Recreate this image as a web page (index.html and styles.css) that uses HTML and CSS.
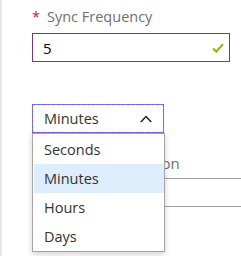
FILE: index.html
```html
<!DOCTYPE html>
<html lang="en">
<head>
    <meta charset="UTF-8">
    <meta name="viewport" content="width=device-width, initial-scale=1.0">
    <title>Sync Settings</title>
    <link rel="stylesheet" href="styles.css">
</head>
<body>

    <div class="form">
        <div class="field-label"><span class="required">*</span>Sync Frequency</div>
        <div class="text-input">
            <span>5</span>
            <svg class="check" width="12" height="10" viewBox="0 0 12 10">
                <path d="M1 5.5 L4.3 8.6 L11 1.2" fill="none" stroke="#7fba00" stroke-width="2"/>
            </svg>
        </div>

        <div class="dropdown">
            <div class="select">
                <span>Minutes</span>
                <svg width="12" height="8" viewBox="0 0 12 8">
                    <path d="M0.8 7 L6 1.6 L11.2 7" fill="none" stroke="#222" stroke-width="1.5"/>
                </svg>
            </div>
            <ul class="menu">
                <li class="menu-item">Seconds</li>
                <li class="menu-item active">Minutes</li>
                <li class="menu-item">Hours</li>
                <li class="menu-item">Days</li>
            </ul>
        </div>

        <div class="field-label desc-label">Schedule Description</div>
        <div class="plain-input"></div>
    </div>

</body>
</html>
```

FILE: styles.css
```css
body {
    font-family: "Open Sans", "Noto Sans", sans-serif;
    background-color: #fff;
    margin: 0;
    height: 256px;
    border-left: 2px solid #e6e6e6;
    overflow: hidden;
}

.form {
    padding-left: 30px;
}

.field-label {
    margin-top: 6px;
    height: 22px;
    line-height: 22px;
    font-size: 14.5px;
    color: #707070;
}

.required {
    color: #e81123;
    margin-right: 7px;
}

.text-input {
    margin-top: 5px;
    box-sizing: border-box;
    width: 198px;
    height: 29px;
    border: 1px solid #7f2f9d;
    padding: 0 5px 0 10px;
    display: flex;
    align-items: center;
    justify-content: space-between;
    font-size: 15px;
    color: #000;
}

.dropdown {
    position: relative;
    margin-top: 42px;
    width: 132px;
}

.select {
    box-sizing: border-box;
    height: 29px;
    border: 1px solid #1aa7e8;
    outline: 1px dashed #c43cd6;
    outline-offset: -1px;
    padding: 0 11px;
    display: flex;
    align-items: center;
    justify-content: space-between;
    font-size: 14.5px;
    color: #333;
}

.menu {
    position: absolute;
    top: 100%;
    left: 0;
    width: 133px;
    box-sizing: border-box;
    margin: 0;
    padding: 1px 0 0;
    list-style-type: none;
    background-color: #fff;
    border: 1px solid #a6a6a6;
    box-shadow: 0 2px 6px rgba(0, 0, 0, 0.2);
    z-index: 2;
}

.menu-item {
    height: 29px;
    line-height: 29px;
    padding-left: 10px;
    margin-left: 1px;
    font-size: 14.5px;
    color: #333;
}

.menu-item.active {
    background-color: #ddedfb;
}

.desc-label {
    margin-top: 19px;
    font-size: 15px;
}

.plain-input {
    margin-top: 4px;
    box-sizing: border-box;
    width: 209px;
    height: 29px;
    border: 1px solid #a0a0a0;
    border-right: none;
}
```
